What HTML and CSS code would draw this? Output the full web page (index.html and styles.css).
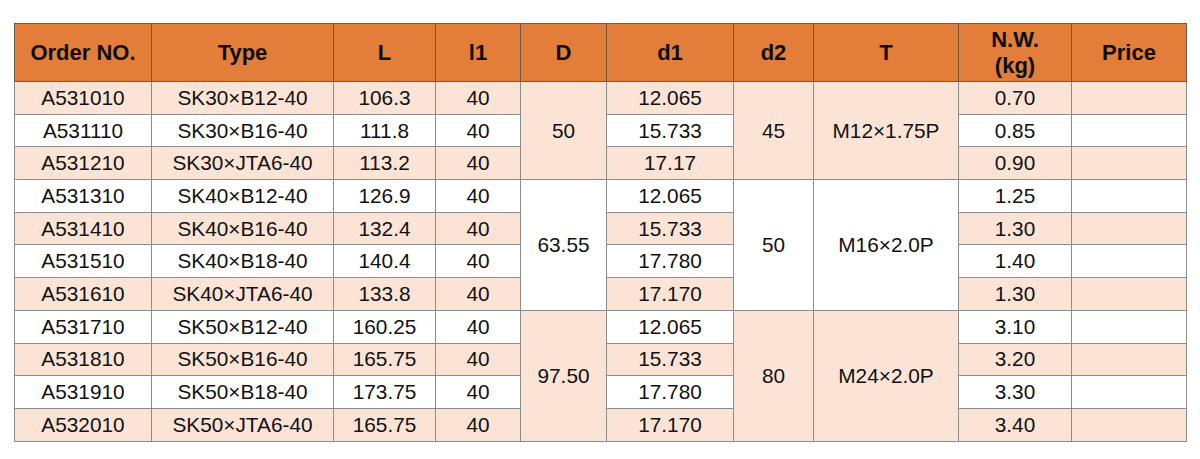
FILE: index.html
```html
<!DOCTYPE html>
<html>
<head>
<meta charset="utf-8">
<link rel="stylesheet" href="styles.css">
</head>
<body>
<div class="page">
<table class="spec">
  <colgroup>
    <col class="c1"><col class="c2"><col class="c3"><col class="c4"><col class="c5"><col class="c6"><col class="c7"><col class="c8"><col class="c9"><col class="c10">
  </colgroup>
  <thead>
    <tr>
      <th>Order NO.</th><th>Type</th><th>L</th><th>l1</th><th>D</th><th>d1</th><th>d2</th><th>T</th><th>N.W.<br>(kg)</th><th>Price</th>
    </tr>
  </thead>
  <tbody>
    <tr class="pk"><td>A531010</td><td>SK30×B12-40</td><td>106.3</td><td>40</td><td rowspan="3" class="mpk">50</td><td>12.065</td><td rowspan="3" class="mpk">45</td><td rowspan="3" class="mpk">M12×1.75P</td><td>0.70</td><td></td></tr>
    <tr class="wh"><td>A531110</td><td>SK30×B16-40</td><td>111.8</td><td>40</td><td>15.733</td><td>0.85</td><td></td></tr>
    <tr class="pk"><td>A531210</td><td>SK30×JTA6-40</td><td>113.2</td><td>40</td><td>17.17</td><td>0.90</td><td></td></tr>
    <tr class="wh"><td>A531310</td><td>SK40×B12-40</td><td>126.9</td><td>40</td><td rowspan="4" class="mwh">63.55</td><td>12.065</td><td rowspan="4" class="mwh">50</td><td rowspan="4" class="mwh">M16×2.0P</td><td>1.25</td><td></td></tr>
    <tr class="pk"><td>A531410</td><td>SK40×B16-40</td><td>132.4</td><td>40</td><td>15.733</td><td>1.30</td><td></td></tr>
    <tr class="wh"><td>A531510</td><td>SK40×B18-40</td><td>140.4</td><td>40</td><td>17.780</td><td>1.40</td><td></td></tr>
    <tr class="pk"><td>A531610</td><td>SK40×JTA6-40</td><td>133.8</td><td>40</td><td>17.170</td><td>1.30</td><td></td></tr>
    <tr class="wh"><td>A531710</td><td>SK50×B12-40</td><td>160.25</td><td>40</td><td rowspan="4" class="mpk">97.50</td><td>12.065</td><td rowspan="4" class="mpk">80</td><td rowspan="4" class="mpk">M24×2.0P</td><td>3.10</td><td></td></tr>
    <tr class="pk"><td>A531810</td><td>SK50×B16-40</td><td>165.75</td><td>40</td><td>15.733</td><td>3.20</td><td></td></tr>
    <tr class="wh"><td>A531910</td><td>SK50×B18-40</td><td>173.75</td><td>40</td><td>17.780</td><td>3.30</td><td></td></tr>
    <tr class="pk"><td>A532010</td><td>SK50×JTA6-40</td><td>165.75</td><td>40</td><td>17.170</td><td>3.40</td><td></td></tr>
  </tbody>
</table>
</div>
</body>
</html>
```

FILE: styles.css
```css
html, body {
  margin: 0;
  padding: 0;
  background: #ffffff;
}
.page {
  padding: 23px 0 0 14px;
}
.spec {
  border-collapse: collapse;
  table-layout: fixed;
  width: 1172px;
  font-family: "Liberation Sans", Arial, sans-serif;
  color: #111111;
  border: 1.5px solid #3a3a3a;
}
.c1 { width: 137px; }
.c2 { width: 182px; }
.c3 { width: 102px; }
.c4 { width: 85px; }
.c5 { width: 86px; }
.c6 { width: 127px; }
.c7 { width: 80px; }
.c8 { width: 145px; }
.c9 { width: 113px; }
.c10 { width: 115px; }
.spec th {
  background: #e37d3a;
  font-weight: bold;
  font-size: 22px;
  line-height: 26px;
  height: 57px;
  padding: 0;
  text-align: center;
  vertical-align: middle;
  border: 1px solid #6e5a4a;
  color: #0d0d0d;
}
.spec td {
  font-size: 20.8px;
  height: 31.7px;
  padding: 0;
  text-align: center;
  vertical-align: middle;
  border: 1px solid #8c8c8c;
  line-height: 22px;
}
.pk td { background: #fbe4d6; }
.wh td { background: #ffffff; }
.spec td.mpk { background: #fbe4d6; }
.spec td.mwh { background: #ffffff; }
```
